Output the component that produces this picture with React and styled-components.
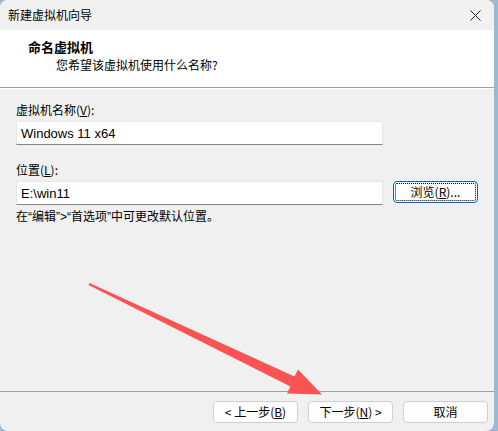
import React from 'react';
import styled, { createGlobalStyle } from 'styled-components';

const GlobalStyle = createGlobalStyle`
  html, body {
    margin: 0;
    padding: 0;
    width: 498px;
    height: 431px;
    overflow: hidden;
    background: #9fb8d2;
  }
  #root {
    height: 431px;
  }
  * {
    box-sizing: border-box;
  }
`;

const font = `"Noto Sans CJK SC", "Liberation Sans", sans-serif`;

const Wizard = styled.div`
  position: relative;
  width: 494px;
  height: 431px;
  display: flex;
  flex-direction: column;
  background: #f0f0f0;
  border-radius: 8px;
  overflow: hidden;
  font-family: ${font};
  font-size: 12px;
  color: #000;
`;

const TitleBar = styled.div`
  height: 30px;
  flex: none;
  display: flex;
  align-items: center;
  justify-content: space-between;
  padding: 0 8px 0 8px;
  background: #f1f1f1;
  line-height: 16px;
`;

const CloseBtn = styled.div`
  width: 30px;
  height: 30px;
  display: flex;
  align-items: center;
  justify-content: center;
  margin-right: -4px;
`;

const Header = styled.div`
  height: 58px;
  flex: none;
  background: #fff;
  padding: 8px 0 0 28px;
  border-bottom: 1px solid #a0a0a0;
  box-shadow: 0 1px 0 #fff;
`;

const HeaderTitle = styled.div`
  font-weight: 700;
  font-size: 13px;
  line-height: 17px;
`;

const HeaderSub = styled.div`
  padding-left: 28px;
  line-height: 17px;
  margin-top: 1px;
`;

const Body = styled.div`
  flex: 1;
  padding: 14px 0 0 16px;
`;

const Label = styled.div`
  line-height: 16px;
  margin-top: ${p => p.$top || 0}px;
  margin-bottom: 3px;
`;

const Key = styled.span`
  text-decoration: underline;
  text-underline-offset: 1px;
`;

// narrow latin punctuation inside CJK text
const Punct = styled.span`
  font-family: "Liberation Sans", sans-serif;
`;

const Row = styled.div`
  display: flex;
  align-items: flex-start;
  gap: 10px;
`;

const Input = styled.div`
  width: 367px;
  height: 24px;
  background: #fff;
  border: 1px solid #e6e6e6;
  border-bottom: 1px solid #868686;
  padding: 0 4px;
  display: flex;
  align-items: center;
  font-family: "Liberation Sans", "Noto Sans CJK SC", sans-serif;
  font-size: 13px;
`;

const Button = styled.div`
  width: ${p => p.$w || 85}px;
  height: ${p => p.$h || 22}px;
  display: flex;
  align-items: center;
  justify-content: center;
  background: #fdfdfd;
  border: 1px solid ${p => (p.$focus ? '#0067c0' : '#d0d0d0')};
  border-radius: 4px;
  outline: ${p => (p.$focus ? '1px dotted #000' : 'none')};
  outline-offset: -3px;
  line-height: 16px;
  white-space: pre;
`;

const Hint = styled.div`
  margin-top: 3px;
  line-height: 16px;
`;

const Footer = styled.div`
  height: 40px;
  flex: none;
  border-top: 1px solid #a0a0a0;
  display: flex;
  justify-content: flex-end;
  gap: 10px;
  padding: 9px 6px 0 0;
`;

const Pointer = styled.svg`
  position: absolute;
  left: 0;
  top: 0;
  pointer-events: none;
`;

const App = () => {
  return (
    <>
      <GlobalStyle />
      <Wizard>
        <TitleBar>
          <span>新建虚拟机向导</span>
          <CloseBtn>
            <svg width="11" height="11" viewBox="0 0 11 11">
              <path d="M0.5 0.5 L10.5 10.5 M10.5 0.5 L0.5 10.5" stroke="#1a1a1a" strokeWidth="1" />
            </svg>
          </CloseBtn>
        </TitleBar>
        <Header>
          <HeaderTitle>命名虚拟机</HeaderTitle>
          <HeaderSub>您希望该虚拟机使用什么名称?</HeaderSub>
        </Header>
        <Body>
          <Label>虚拟机名称(<Key>V</Key>):</Label>
          <Input>Windows 11 x64</Input>
          <Label $top={17}>位置(<Key>L</Key>):</Label>
          <Row>
            <Input>E:\win11</Input>
            <Button $focus>浏览(<Key>R</Key>)...</Button>
          </Row>
          <Hint>
            在<Punct>“</Punct>编辑<Punct>”&gt;“</Punct>首选项<Punct>”</Punct>中可更改默认位置。
          </Hint>
        </Body>
        <Footer>
          <Button>&lt; 上一步(<Key>B</Key>)</Button>
          <Button>下一步(<Key>N</Key>) &gt;</Button>
          <Button>取消</Button>
        </Footer>
        <Pointer width="494" height="431" viewBox="0 0 494 431">
          <polygon
            points="89.5,283 294.5,376.5 298,369.5 322,394.5 287,393.5 290.5,386.5 88.5,285"
            fill="#fb5252"
          />
        </Pointer>
      </Wizard>
    </>
  );
};

export default App;
